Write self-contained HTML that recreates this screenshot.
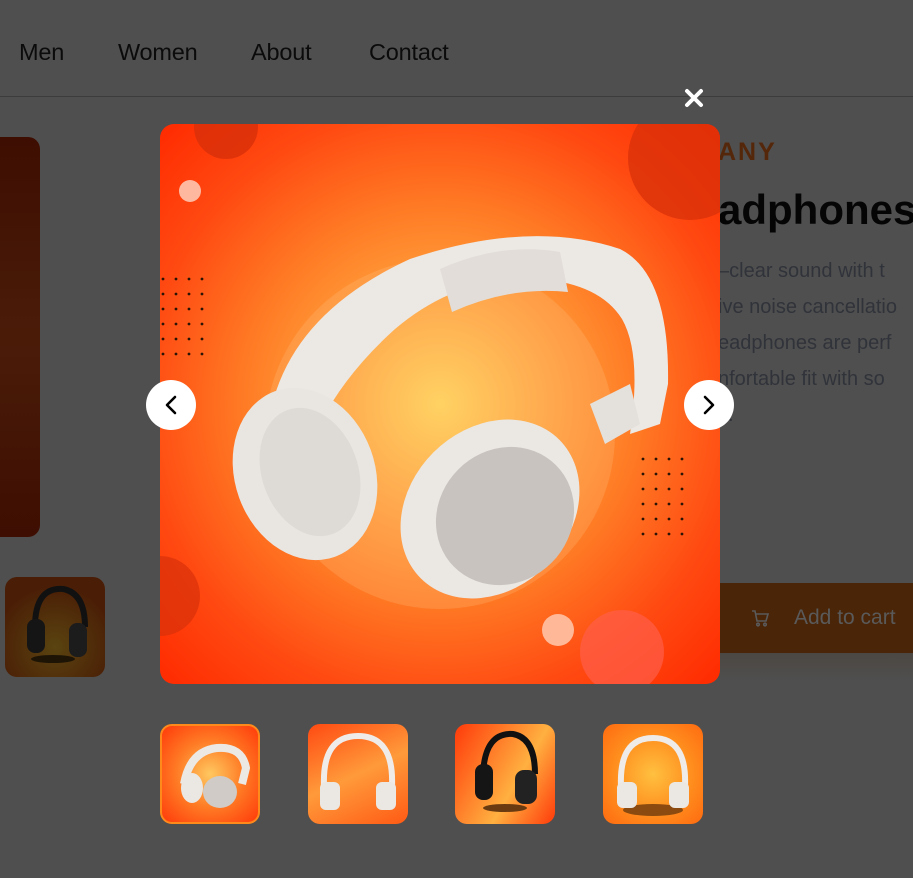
<!DOCTYPE html>
<html><head><meta charset="utf-8"><style>
*{margin:0;padding:0;box-sizing:border-box}
body{width:913px;height:878px;background:#4f4f4f;position:relative;overflow:hidden;font-family:"Liberation Sans",sans-serif}
.a{position:absolute}
.nav{top:39px;font-size:23.5px;color:#0b0b0b;letter-spacing:-0.2px}
.txt{left:718px;white-space:nowrap;overflow:hidden;width:195px}
.body{font-size:20px;color:#30333a;line-height:36px}
.th{width:100px;height:100px;border-radius:12px;overflow:hidden;top:724px}
</style></head><body>
<div class="a nav" style="left:19px">Men</div>
<div class="a nav" style="left:118px">Women</div>
<div class="a nav" style="left:251px">About</div>
<div class="a nav" style="left:369px">Contact</div>
<div class="a" style="left:0;top:96px;width:913px;height:1px;background:#3c3c3c"></div>

<div class="a" style="left:-20px;top:137px;width:60px;height:400px;border-radius:12px;background:linear-gradient(180deg,#3e0e02,#4a1c08 50%,#3e0e02)"></div>
<div class="a" style="left:5px;top:577px;width:100px;height:100px;border-radius:12px;background:radial-gradient(circle at 50% 70%,#5a4410,#4a1e06 70%);overflow:hidden">
<svg width="100" height="100"><ellipse cx="48" cy="82" rx="22" ry="4" fill="#1d1406"/><path d="M30 50 Q30 10 58 12 Q80 16 80 50" stroke="#111" stroke-width="6" fill="none"/><rect x="22" y="42" width="18" height="34" rx="8" fill="#151515"/><rect x="64" y="46" width="18" height="34" rx="8" fill="#1c1c1c"/></svg></div>

<div class="a" style="left:718px;top:138px;font-size:25px;font-weight:bold;color:#55270a;letter-spacing:2px">ANY</div>
<div class="a txt" style="top:186px;font-size:42px;font-weight:bold;color:#050505">adphones</div>
<div class="a txt body" style="top:253px">–clear sound with t<br>ive noise cancellatio<br>eadphones are perf<br>nfortable fit with so<br>s.</div>
<div class="a" style="left:718px;top:583px;width:200px;height:70px;background:#4a2508;color:#5a5a5a;font-size:21px;line-height:70px;padding-left:76px">Add to cart</div>
<div class="a" style="left:718px;top:653px;width:200px;height:28px;background:linear-gradient(#4c4742,#4f4f4f)"></div>
<svg class="a" style="left:750px;top:608px" width="20" height="20" viewBox="0 0 20 20" fill="none" stroke="#5a5a5a" stroke-width="1.6"><path d="M2 3h3l2 10h9l2-7H6"/><circle cx="8" cy="16.5" r="1.3"/><circle cx="15" cy="16.5" r="1.3"/></svg>

<div class="a" style="left:160px;top:124px;width:560px;height:560px;border-radius:14px;overflow:hidden;background:radial-gradient(circle at 50% 50%,#ffd85a 0%,#ffa640 25%,#ff7a24 50%,#ff4a12 75%,#ff2a00 100%)">
<svg width="560" height="560">
<circle cx="66" cy="3" r="32" fill="#d8300a" opacity=".8"/>
<circle cx="530" cy="34" r="62" fill="#d8300a" opacity=".75"/>
<circle cx="0" cy="472" r="40" fill="#d8300a" opacity=".7"/>
<circle cx="462" cy="528" r="42" fill="#ff5e4a" opacity=".7"/>
<circle cx="30" cy="67" r="11" fill="#ffb8a0"/>
<circle cx="398" cy="506" r="16" fill="#ffb898"/>
<circle cx="280" cy="310" r="175" fill="#ffc080" opacity=".25"/>
<g fill="#2a1406">
<g id="d"><circle cx="3" cy="155" r="1.4"/><circle cx="16" cy="155" r="1.4"/><circle cx="29" cy="155" r="1.4"/><circle cx="42" cy="155" r="1.4"/></g>
<use href="#d" y="15"/><use href="#d" y="30"/><use href="#d" y="45"/><use href="#d" y="60"/><use href="#d" y="75"/>
<g transform="translate(480,180)"><use href="#d"/><use href="#d" y="15"/><use href="#d" y="30"/><use href="#d" y="45"/><use href="#d" y="60"/><use href="#d" y="75"/></g>
</g>
<path d="M110 290 Q130 190 250 135 Q370 95 460 125 Q510 150 508 260 L500 300 L470 310 Q482 230 462 195 Q440 160 380 155 Q300 150 235 205 Q185 250 160 300 Z" fill="#ece8e4"/>
<path d="M280 145 Q340 118 400 128 L408 168 Q350 162 292 188 Z" fill="#e2ddd8"/>
<ellipse cx="145" cy="350" rx="70" ry="88" transform="rotate(-20 145 350)" fill="#e9e5e1"/>
<ellipse cx="150" cy="348" rx="48" ry="66" transform="rotate(-20 150 348)" fill="#dedad6"/>
<ellipse cx="330" cy="385" rx="98" ry="80" transform="rotate(-45 330 385)" fill="#ebe7e3"/>
<ellipse cx="345" cy="392" rx="72" ry="66" transform="rotate(-45 345 392)" fill="#c8c3bf"/>
<path d="M430 280 L470 260 L480 300 L445 320 Z" fill="#e4e0dc"/>
</svg></div>

<svg class="a" style="left:683px;top:87px" width="22" height="22" viewBox="0 0 22 22"><path d="M4 4L18 18M18 4L4 18" stroke="#fff" stroke-width="4" stroke-linecap="round"/></svg>
<div class="a" style="left:146px;top:380px;width:50px;height:50px;border-radius:50%;background:#fff"></div>
<svg class="a" style="left:146px;top:380px" width="50" height="50"><path d="M29 17L21 25L29 33" stroke="#000" stroke-width="2.6" fill="none" stroke-linecap="round" stroke-linejoin="round"/></svg>
<div class="a" style="left:684px;top:380px;width:50px;height:50px;border-radius:50%;background:#fff"></div>
<svg class="a" style="left:684px;top:380px" width="50" height="50"><path d="M21 17L29 25L21 33" stroke="#000" stroke-width="2.6" fill="none" stroke-linecap="round" stroke-linejoin="round"/></svg>

<div class="a th" style="left:160px;border:2px solid #ff8a1c;background:radial-gradient(circle,#ffc860,#ff7a24 50%,#ff3a0a)">
<svg width="96" height="96"><path d="M22 58 Q28 25 55 22 Q80 20 84 42 L80 58" stroke="#ece8e4" stroke-width="8" fill="none"/><ellipse cx="30" cy="62" rx="11" ry="15" fill="#ebe7e3"/><ellipse cx="58" cy="66" rx="17" ry="16" fill="#d0cbc6"/></svg></div>
<div class="a th" style="left:308px;background:linear-gradient(155deg,#ff4a12,#ff9a3a 50%,#ff5a14)">
<svg width="100" height="100"><path d="M16 62 Q14 12 50 12 Q86 12 84 62" stroke="#efebe8" stroke-width="6" fill="none"/><rect x="12" y="58" width="20" height="28" rx="6" fill="#ebe7e3"/><rect x="68" y="58" width="20" height="28" rx="6" fill="#ebe7e3"/></svg></div>
<div class="a th" style="left:455px;background:linear-gradient(120deg,#ff3a0a,#ffb040 60%,#ff3a0a)">
<svg width="100" height="100"><ellipse cx="50" cy="84" rx="22" ry="4" fill="#6a3a10"/><path d="M28 50 Q30 8 58 10 Q80 14 80 50" stroke="#111" stroke-width="6" fill="none"/><rect x="20" y="40" width="18" height="36" rx="8" fill="#151515"/><rect x="60" y="46" width="22" height="34" rx="9" fill="#222"/></svg></div>
<div class="a th" style="left:603px;background:radial-gradient(circle,#ffc040,#ff8a1c 60%,#ff6a10)">
<svg width="100" height="100"><ellipse cx="50" cy="86" rx="30" ry="6" fill="#8a4a10"/><path d="M18 62 Q16 14 50 14 Q84 14 82 62" stroke="#efebe8" stroke-width="6" fill="none"/><rect x="14" y="58" width="20" height="26" rx="6" fill="#ebe7e3"/><rect x="66" y="58" width="20" height="26" rx="6" fill="#ebe7e3"/></svg></div>
</body></html>
